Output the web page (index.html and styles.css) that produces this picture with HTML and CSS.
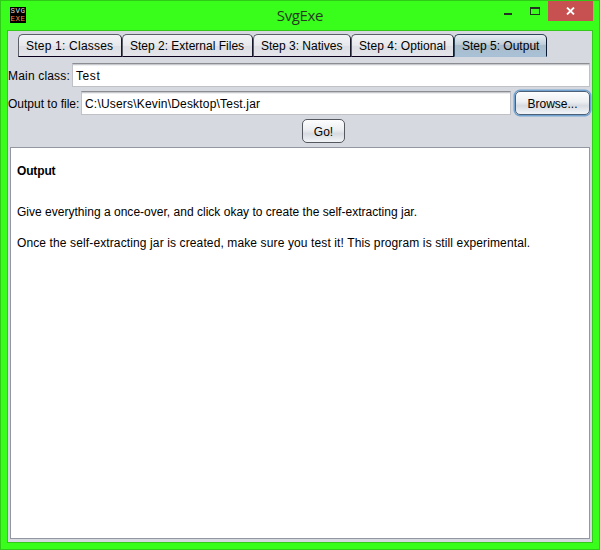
FILE: index.html
```html
<!DOCTYPE html>
<html lang="en">
<head>
<meta charset="utf-8">
<title>SvgExe</title>
<link rel="stylesheet" href="styles.css">
</head>
<body>
<div class="window">
  <header class="titlebar">
    <div class="app-icon"><span class="icon-top">SVG</span><span class="icon-bottom">EXE</span></div>
    <h1 class="title">SvgExe</h1>
    <div class="controls">
      <svg class="minimize" width="8" height="2" viewBox="0 0 8 2"><path d="M0 0h8v2H0z" fill="#263126"/></svg>
      <svg class="maximize" width="10" height="8" viewBox="0 0 10 8"><path d="M0 0h10v8H0zM1 2v5h8V2z" fill="#263126" fill-rule="evenodd"/></svg>
      <div class="close"><svg width="9" height="8" viewBox="0 0 9 8"><path d="M1 .5l7 7M8 .5l-7 7" stroke="#fff" stroke-width="1.8"/></svg></div>
    </div>
  </header>
  <main class="client">
    <nav class="tabs">
      <div class="tab tab-classes"><span>Step 1: Classes</span></div>
      <div class="tab tab-files"><span>Step 2: External Files</span></div>
      <div class="tab tab-natives"><span>Step 3: Natives</span></div>
      <div class="tab tab-optional"><span>Step 4: Optional</span></div>
      <div class="tab tab-output selected"><span>Step 5: Output</span></div>
    </nav>
    <div class="row row-main"><span class="label label-main">Main class:</span><div class="field"><span class="value-main">Test</span></div></div>
    <div class="row row-file"><span class="label label-file">Output to file:</span><div class="field"><span class="value-file">C:\Users\Kevin\Desktop\Test.jar</span></div><div class="button browse"><span>Browse...</span></div></div>
    <div class="actions"><div class="button go"><span>Go!</span></div></div>
    <section class="output">
      <h2>Output</h2>
      <p class="p1">Give everything a once-over, and click okay to create the self-extracting jar.</p>
      <p class="p2">Once the self-extracting jar is created, make sure you test it! This program is still experimental.</p>
    </section>
  </main>
</div>
</body>
</html>
```
FILE: styles.css
```css
* { box-sizing: border-box; }
body { margin: 0; font: 12px/14px "Liberation Sans", Arial, sans-serif; color: #000; }
.window { width: 600px; height: 550px; background: #39fd1a; border: 1px solid #2fca17; padding: 0 6px 6px; display: flex; flex-direction: column; }
.titlebar { height: 29px; flex: none; display: grid; grid-template-columns: 93px 1fr 93px; }
.app-icon { width: 16px; height: 16px; margin: 6px 0 0 3px; background: #000; display: flex; flex-direction: column; overflow: hidden; font: 7.5px/8px "Liberation Mono", monospace; letter-spacing: .5px; }
.icon-top { color: #ddd; height: 8px; padding-left: .5px; }
.icon-bottom { color: #ff8a3c; height: 8px; padding-left: .5px; }
.title { margin: 5px 0 0; font: 15px/18px "Open Sans", "Noto Sans", sans-serif; letter-spacing: -.35px; color: #263a22; text-align: center; }
.controls { display: flex; align-items: flex-start; padding-left: 5px; }
.minimize { margin: 12px 0 0 -1px; }
.maximize { margin: 6px 0 0 18px; }
.close { width: 45px; height: 20px; margin-left: 8px; flex: none; background: #c75050; display: flex; align-items: center; justify-content: center; }
.client { flex: 1; border: 1px solid #32c91b; background: #d6d9df; display: flex; flex-direction: column; }
.tabs { display: flex; height: 26px; padding: 3px 0 0 10px; flex: none; }
.tab { height: 23px; border: 1px solid #5c5f68; border-right-color: #17182a; border-bottom: 1px solid #08001c; border-radius: 5px 5px 0 0; background: linear-gradient(#f3f4f6, #e6e8ec 50%, #dddfe5 52%, #e3e5ea); padding: 4px 0 0 7px; white-space: nowrap; }
.tab-classes { width: 104px; letter-spacing: .22px; }
.tab-files { width: 131px; }
.tab-natives { width: 98px; }
.tab-optional { width: 103px; letter-spacing: .06px; }
.tab-output { width: 93px; }
.tab.selected { border-color: #30465b #0a1830 #a7bfd4 #30465b; background: linear-gradient(#e7eef3, #bfced9 45%, #a9bccb 50%, #a9c1d6); }
.row { display: flex; align-items: center; height: 24px; flex: none; white-space: nowrap; }
.row-main { margin: 6px 2px 0 0; }
.row-file { margin: 4px 1px 0 0; }
.label { padding-top: 1px; }
.label-main { width: 64px; letter-spacing: .18px; }
.label-file { width: 73px; }
.field { flex: 1; height: 24px; border: 1px solid #bfc1c6; border-top-color: #8b8d93; background: linear-gradient(#c8c9cc 0 1px, #eeeff0 1px 2px, #fff 2px); padding: 5px 0 0 3px; }
.value-main { letter-spacing: .6px; }
.value-file { letter-spacing: .19px; }
.button { border: 1px solid #55585f; border-radius: 5px; background: linear-gradient(#fdfdfe, #eceef1 45%, #d7dbe1 62%, #f2f4f7); text-align: center; }
.browse { width: 75px; height: 24px; margin: 0 1px 0 4px; border-color: #4c6178; box-shadow: 0 0 0 1.5px #73a4d1; padding-top: 5px; }
.actions { display: flex; justify-content: center; height: 24px; margin-top: 4px; padding-left: 47px; padding-right: 0; flex: none; }
.actions .button { height: 24px; }
.go { width: 43px; padding-top: 5px; }
.output { flex: 1; margin: 4px 2px 3px; border: 1px solid #9297a1; background: #fff; padding: 16px 6px 0; white-space: nowrap; }
h2 { margin: 0; font-size: 12px; line-height: 14px; letter-spacing: -.15px; }
.p1 { margin: 27px 0 0; letter-spacing: .015px; }
.p2 { margin: 17px 0 0; letter-spacing: .12px; }
```
